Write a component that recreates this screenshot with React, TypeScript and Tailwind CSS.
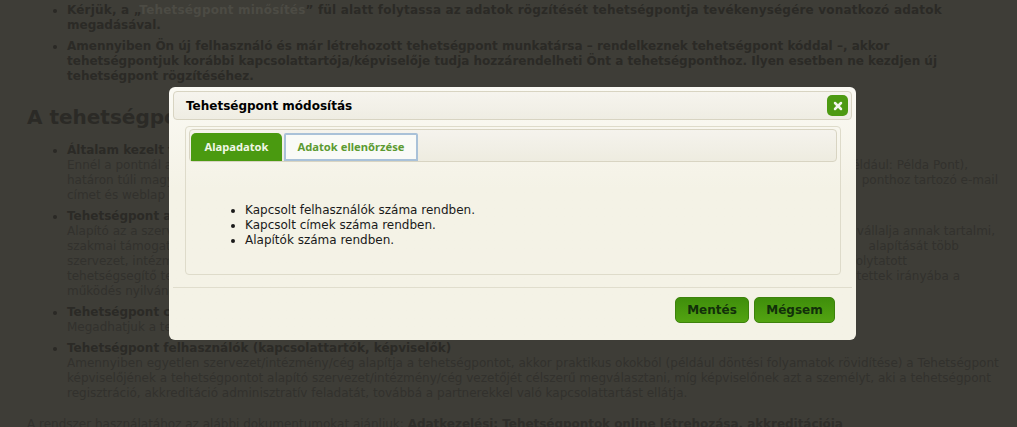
import { X } from 'lucide-react';

function Split({ left, right, className }: { left: string; right: string; className: string }) {
  return (
    <div className={`flex justify-between ${className}`}>
      <span>{left}</span>
      <span>{right}</span>
    </div>
  );
}

function Background() {
  return (
    <div className="h-[427px] overflow-hidden whitespace-nowrap bg-[#3e3d37] pt-[3px] text-[12px] leading-[15px] text-[#32312d]">
      <ul className="ml-[67px] flex list-disc flex-col gap-[6px] marker:text-[#2a2925]">
        <li className="font-bold text-[#2b2a26]">
          <div className="tracking-[0.19px]">
            Kérjük, a „<span className="text-[#4c4b44]">Tehetségpont minősítés</span>” fül alatt folytassa az adatok rögzítését tehetségpontja tevékenységére vonatkozó adatok
          </div>
          <div>megadásával.</div>
        </li>
        <li className="font-bold text-[#2b2a26]">
          <div>Amennyiben Ön új felhasználó és már létrehozott tehetségpont munkatársa – rendelkeznek tehetségpont kóddal –, akkor</div>
          <div>tehetségpontjuk korábbi kapcsolattartója/képviselője tudja hozzárendelheti Önt a tehetségponthoz. Ilyen esetben ne kezdjen új</div>
          <div>tehetségpont rögzítéséhez.</div>
        </li>
      </ul>
      <h2 className="ml-[27px] mt-[21px] text-[20px] font-bold leading-[24px] text-[#2b2a26]">A tehetségpont adatai</h2>
      <ul className="ml-[67px] mt-[14px] flex list-disc flex-col gap-[6px] marker:text-[#2a2925]">
        <li>
          <div className="font-bold text-[#2b2a26]">Általam kezelt tehetségpont</div>
          <Split className="w-[901px]" left="Ennél a pontnál adja meg" right="(például: Példa Pont)," />
          <Split className="w-[931px]" left="határon túli magyar" right="ponthoz tartozó e-mail" />
          <div>címet és weblap címet.</div>
        </li>
        <li>
          <div className="font-bold text-[#2b2a26]">Tehetségpont alapítók</div>
          <Split className="w-[928px]" left="Alapító az a szervezet" right="vállalja annak tartalmi," />
          <Split className="w-[892px]" left="szakmai támogatását" right="alapítását több" />
          <Split className="w-[840px]" left="szervezet, intézmény" right="folytatott" />
          <Split className="w-[893px]" left="tehetségsegítő tevékenység" right="tettek irányába a" />
          <div>működés nyilvános.</div>
        </li>
        <li>
          <div className="font-bold text-[#2b2a26]">Tehetségpont címek</div>
          <div>Megadhatjuk a tehetségpont címét.</div>
        </li>
        <li>
          <div className="font-bold text-[#2b2a26]">Tehetségpont felhasználók (kapcsolattartók, képviselők)</div>
          <div className="tracking-[0.03px]">Amennyiben egyetlen szervezet/intézmény/cég alapítja a tehetségpontot, akkor praktikus okokból (például döntési folyamatok rövidítése) a Tehetségpont</div>
          <div>képviselőjének a tehetségpontot alapító szervezet/intézmény/cég vezetőjét célszerű megválasztani, míg képviselőnek azt a személyt, aki a tehetségpont</div>
          <div>regisztráció, akkreditáció adminisztratív feladatát, továbbá a partnerekkel való kapcsolattartást ellátja.</div>
        </li>
      </ul>
      <p className="ml-[27px] mt-[16px]">
        A rendszer használatához az alábbi dokumentumokat ajánljuk:{' '}
        <span className="font-bold tracking-[-0.04px] text-[#2f2e2a]">Adatkezelési; Tehetségpontok online létrehozása, akkreditációja</span>
      </p>
    </div>
  );
}

function Modal() {
  return (
    <div className="absolute left-[169px] top-[87px] flex h-[253px] w-[687px] flex-col rounded-[6px] bg-gradient-to-b from-[#fbfaf4] from-0% to-[#f4f2e6] to-40% p-[4px] text-black">
      <div className="flex h-[29px] items-center justify-between rounded-[4px] border border-[#d8d4c2] bg-gradient-to-b from-[#f6f4ee] to-[#efede3] pl-[12px] pr-[3px]">
        <span className="text-[12px] font-bold">Tehetségpont módosítás</span>
        <button className="flex h-[21px] w-[21px] items-center justify-center rounded-[5px] bg-[#4d9a12]">
          <X size={12} strokeWidth={5} className="text-[#f4f6ee]" />
        </button>
      </div>
      <div className="ml-[12px] mr-[11px] mt-[6px] h-[149px] rounded-[4px] border border-[#dedbca] px-[3px] pt-[2px]">
        <div className="flex h-[33px] items-end gap-[2px] rounded-[4px] border border-[#d8d4c2] bg-gradient-to-b from-[#f5f3ed] to-[#eeece0] pl-[1px] font-['Noto_Sans',sans-serif] text-[11.2px] font-bold">
          <div className="flex h-[28px] w-[91px] items-center justify-center rounded-t-[5px] bg-[#4a9a10] text-[#f0f6e6]">
            Alapadatok
          </div>
          <div className="flex h-[28px] w-[134px] items-center justify-center rounded-t-[2px] border-2 border-[#a9c1d8] bg-[#f9faf7] text-[#5c9a32]">
            Adatok ellenőrzése
          </div>
        </div>
        <ul className="ml-[56px] mt-[41px] list-disc text-[12px] leading-[15px] text-[#1a1a1a]">
          <li>Kapcsolt felhasználók száma rendben.</li>
          <li>Kapcsolt címek száma rendben.</li>
          <li>Alapítók száma rendben.</li>
        </ul>
      </div>
      <div className="mt-[12px] border-t border-[#e0ddcd]" />
      <div className="mt-[9px] flex justify-end gap-[5px] pr-[17px]">
        <button className="h-[26px] w-[74px] rounded-[5px] border border-[#3d820c] bg-gradient-to-b from-[#3f8e0b] to-[#53a412] text-[12px] font-bold text-[#12300a]">
          Mentés
        </button>
        <button className="h-[26px] w-[81px] rounded-[5px] border border-[#3d820c] bg-gradient-to-b from-[#3f8e0b] to-[#53a412] text-[12px] font-bold text-[#12300a]">
          Mégsem
        </button>
      </div>
    </div>
  );
}

export default function App() {
  return (
    <div className="relative h-[427px] w-[1017px] overflow-hidden font-['DejaVu_Sans',sans-serif]">
      <Background />
      <Modal />
    </div>
  );
}
